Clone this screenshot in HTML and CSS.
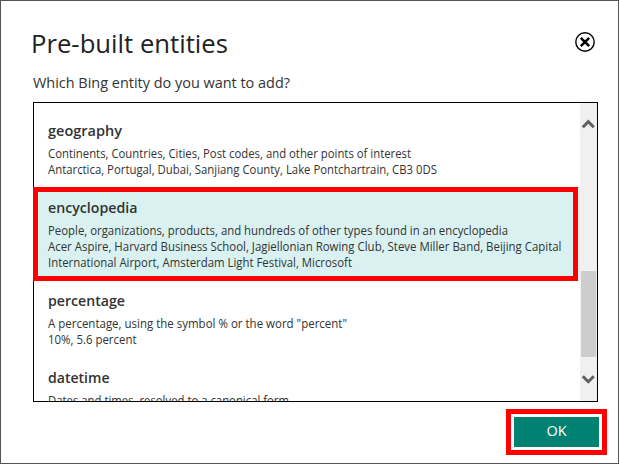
FILE: index.html
```html
<!DOCTYPE html>
<html lang="en">
<head>
<meta charset="utf-8">
<title>Pre-built entities</title>
<link rel="stylesheet" href="styles.css">
</head>
<body>
<main class="dialog">
  <header class="header">
    <h1 class="title"><svg class="fit" width="197" height="36"><text x="0" y="26" textLength="197" lengthAdjust="spacingAndGlyphs">Pre-built entities</text></svg></h1>
    <button class="close" aria-label="Close"><svg width="22" height="22" viewBox="0 0 22 22"><circle cx="11" cy="11" r="9.2" fill="none" stroke="#000" stroke-width="1.4"/><path d="M6.8 6.8l8.4 8.4M15.2 6.8l-8.4 8.4" stroke="#000" stroke-width="2.5"/></svg></button>
  </header>
  <p class="question"><svg class="fit" width="258" height="20"><text x="0" y="15" textLength="257" lengthAdjust="spacingAndGlyphs">Which Bing entity do you want to add?</text></svg></p>
  <div class="list">
    <div class="items">
      <section class="item first">
        <h2><svg class="fit" width="74" height="20"><text x="0" y="15" textLength="74" lengthAdjust="spacingAndGlyphs">geography</text></svg></h2>
        <p><svg class="fit" width="363" height="16"><text x="0" y="12" textLength="363" lengthAdjust="spacingAndGlyphs">Continents, Countries, Cities, Post codes, and other points of interest</text></svg></p>
        <p><svg class="fit" width="389" height="16"><text x="0" y="12" textLength="389" lengthAdjust="spacingAndGlyphs">Antarctica, Portugal, Dubai, Sanjiang County, Lake Pontchartrain, CB3 0DS</text></svg></p>
      </section>
      <section class="item selected">
        <h2><svg class="fit" width="90" height="20"><text x="0" y="15" textLength="89.5" lengthAdjust="spacingAndGlyphs">encyclopedia</text></svg></h2>
        <p><svg class="fit" width="460" height="16"><text x="0" y="12" textLength="460" lengthAdjust="spacingAndGlyphs">People, organizations, products, and hundreds of other types found in an encyclopedia</text></svg></p>
        <p><svg class="fit" width="514" height="16"><text x="0" y="12" textLength="513.5" lengthAdjust="spacingAndGlyphs">Acer Aspire, Harvard Business School, Jagiellonian Rowing Club, Steve Miller Band, Beijing Capital</text></svg></p>
        <p><svg class="fit" width="304" height="16"><text x="0" y="12" textLength="304" lengthAdjust="spacingAndGlyphs">International Airport, Amsterdam Light Festival, Microsoft</text></svg></p>
      </section>
      <section class="item">
        <h2><svg class="fit" width="77" height="20"><text x="0" y="15" textLength="77" lengthAdjust="spacingAndGlyphs">percentage</text></svg></h2>
        <p><svg class="fit" width="299" height="16"><text x="0" y="12" textLength="299" lengthAdjust="spacingAndGlyphs">A percentage, using the symbol % or the word "percent"</text></svg></p>
        <p><svg class="fit" width="89" height="16"><text x="0" y="12" textLength="88.5" lengthAdjust="spacingAndGlyphs">10%, 5.6 percent</text></svg></p>
      </section>
      <section class="item">
        <h2><svg class="fit" width="62" height="20"><text x="0" y="15" textLength="61.5" lengthAdjust="spacingAndGlyphs">datetime</text></svg></h2>
        <p><svg class="fit" width="242" height="16"><text x="0" y="12" textLength="241" lengthAdjust="spacingAndGlyphs">Dates and times, resolved to a canonical form</text></svg></p>
      </section>
    </div>
    <div class="scrollbar">
      <svg width="17" height="17" viewBox="0 0 17 17"><path d="M2.8 11.2l5.5-5.5 5.5 5.5" fill="none" stroke="#606060" stroke-width="3"/></svg>
      <div class="thumb"></div>
      <svg width="17" height="17" viewBox="0 0 17 17"><path d="M2.8 5.2l5.5 5.5 5.5-5.5" fill="none" stroke="#606060" stroke-width="3"/></svg>
    </div>
  </div>
  <footer class="footer"><div class="highlight"><button class="ok">OK</button></div></footer>
</main>
</body>
</html>
```

FILE: styles.css
```css
*, *::after { box-sizing: border-box; }
body { margin: 0; font-family: "Open Sans", "Noto Sans", sans-serif; color: #333; }
h1, h2, p { margin: 0; font-weight: 400; }
svg { display: block; }
.fit { overflow: visible; fill: currentColor; }
.dialog { width: 619px; height: 464px; border: 1px solid #555; background: #fff; overflow: hidden; }
.header { display: flex; justify-content: space-between; height: 72px; padding: 26px 22px 0 30px; }
.title { font-size: 26px; color: #222; }
.close { width: 22px; height: 22px; margin-top: 4px; padding: 0; border: 0; background: none; color: #000; }
.question { margin-left: 32px; height: 29px; font-size: 15px; }
.list { position: relative; display: flex; width: 565px; height: 300px; margin-left: 32px; border: 1px solid #000; }
.list::after { content: ""; position: absolute; left: -1px; top: 84px; width: 545px; height: 94px; border: 5px solid #f00; }
.items { width: 546px; height: 298px; overflow: hidden; }
.item { height: 77px; padding: 10px 0 0 14px; font-size: 12.3px; }
.item h2 { height: 25px; font-size: 14.3px; font-weight: 600; }
.item p { height: 16px; }
.item.first { height: 84px; padding-top: 18px; }
.item.selected { height: 94px; padding-top: 11px; background: #d9f2f1; }
.scrollbar { display: flex; flex-direction: column; width: 17px; padding-top: 13px; background: #f0f0f0; }
.thumb { width: 15px; height: 86px; margin: 138px 0 14px 1px; background: #cdcdcd; }
.footer { display: flex; justify-content: flex-end; padding: 7px 11px 0 0; }
.highlight { width: 101px; height: 46px; padding: 3px; border: 5px solid #f00; }
.ok { display: block; width: 85px; height: 30px; border: 0; padding: 0 0 3px; background: #008272; color: #fff; font: 14.5px "Open Sans", sans-serif; }
```
